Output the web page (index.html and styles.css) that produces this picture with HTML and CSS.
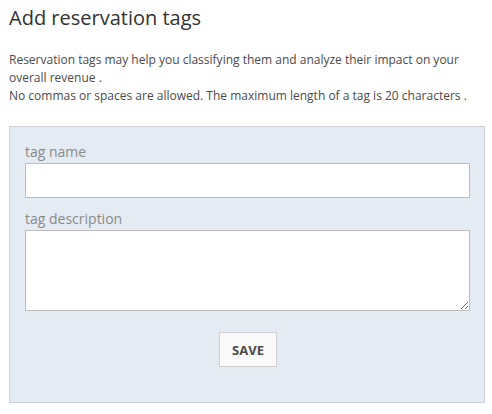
FILE: index.html
```html
<!DOCTYPE html>
<html>
<head>
<meta charset="utf-8">
<link rel="stylesheet" href="styles.css">
</head>
<body>
<div class="page">
  <h1 class="title">Add reservation tags</h1>
  <p class="intro">Reservation tags may help you classifying them and analyze their impact on your overall revenue .<br>No commas or spaces are allowed. The maximum length of a tag is 20 characters .</p>
  <form class="panel">
    <label class="label" for="tagname">tag name</label>
    <input class="field" id="tagname" type="text">
    <label class="label label-second" for="tagdesc">tag description</label>
    <textarea class="field area" id="tagdesc"></textarea>
    <div class="actions">
      <button class="btn" type="button">SAVE</button>
    </div>
  </form>
</div>
</body>
</html>
```
FILE: styles.css
```css
html, body {
  margin: 0;
  padding: 0;
  background: #fff;
}
body {
  font-family: "Open Sans", "Liberation Sans", sans-serif;
  color: #444;
}
.page {
  padding: 7px 7px 0 9px;
  width: 476px;
}
.title {
  margin: 0;
  font-size: 20px;
  line-height: 22px;
  font-weight: 400;
  color: #333;
}
.intro {
  margin: 22px 0 0 0;
  font-size: 12px;
  line-height: 18px;
  color: #4a4a4a;
}
.panel {
  margin-top: 21px;
  box-sizing: border-box;
  width: 476px;
  border: 1px solid #cfd3d8;
  background: #e4ebf3;
  padding: 14px 15px 35px 15px;
  display: flex;
  flex-direction: column;
}
.label {
  font-size: 14px;
  line-height: 22px;
  color: #8a8a8a;
}
.label-second {
  margin-top: 10px;
}
.field {
  box-sizing: border-box;
  width: 445px;
  height: 35px;
  margin: 0;
  border: 1px solid #bdbdbd;
  background: #fff;
  font-family: inherit;
  font-size: 13px;
  padding: 4px 8px;
  border-radius: 0;
  outline: none;
}
.area {
  height: 81px;
  resize: vertical;
  display: block;
}
.actions {
  display: flex;
  justify-content: center;
  margin-top: 21px;
}
.btn {
  box-sizing: border-box;
  width: 58px;
  height: 35px;
  border: 1px solid #cfcfcf;
  background: #fafafa;
  font-family: inherit;
  font-size: 13px;
  font-weight: 700;
  color: #4a4a4a;
  padding: 0;
  border-radius: 0;
  margin-left: 2px;
}
```
